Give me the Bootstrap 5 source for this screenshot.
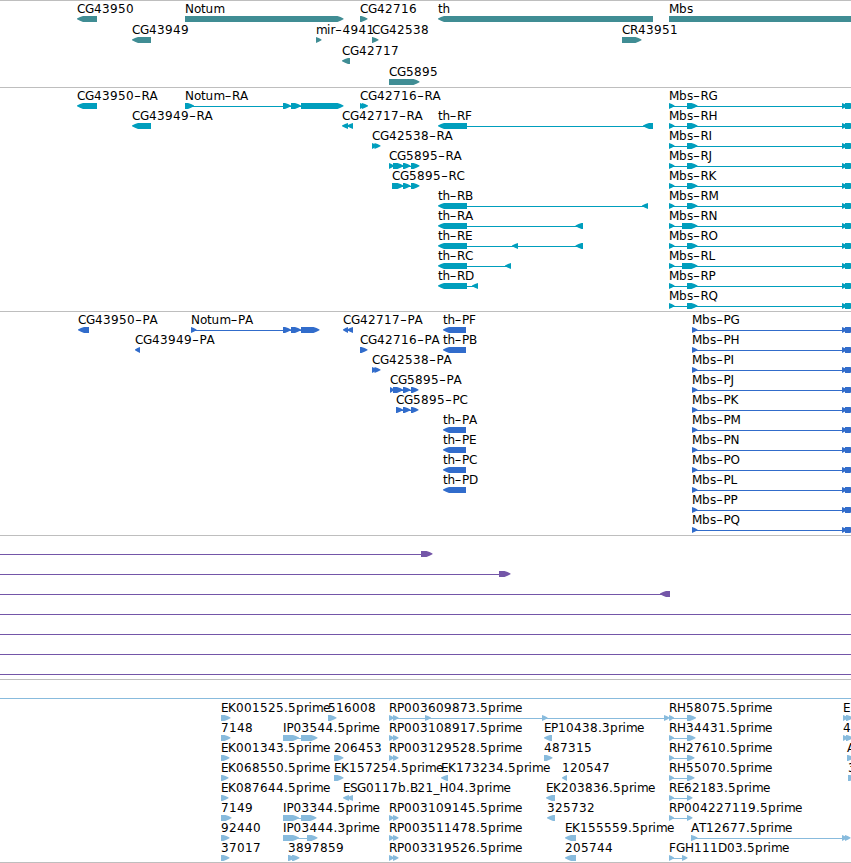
<!DOCTYPE html>
<html lang="en">
<head>
  <meta charset="UTF-8">
  <title>Genome Browser Tracks</title>
  <meta name="viewport" content="width=device-width, initial-scale=1.0">
  <link href="https://cdn.jsdelivr.net/npm/bootstrap@5.3.3/dist/css/bootstrap.min.css" rel="stylesheet">
  <style>
    body {
      font-family: "DejaVu Sans", sans-serif;
      overflow: hidden;
    }
    .browser {
      height: 863px;
      border-bottom: 1px solid #bebebe;
    }
    .track {
      border-top: 1px solid #bebebe;
    }
    .track svg {
      width: 100%;
      height: 100%;
    }
    .track text {
      font-size: 12px;
      fill: #000;
    }
    .track-genes { height: 87px; color: #408d94; }
    .track-transcripts { height: 224px; color: #009ebd; }
    .track-proteins { height: 224px; color: #316ccb; }
    .track-regions { height: 144px; color: #7456a8; }
    .track-ests { height: 183px; color: #88bbdd; }
  </style>
</head>
<body class="bg-white">

<main class="browser container-fluid p-0 d-flex flex-column overflow-hidden">
  <section class="track track-genes flex-shrink-0" data-track="genes" data-pitch="21"></section>
  <section class="track track-transcripts flex-shrink-0" data-track="transcripts" data-pitch="20"></section>
  <section class="track track-proteins flex-shrink-0" data-track="proteins" data-pitch="20"></section>
  <section class="track track-regions flex-shrink-0" data-track="regions" data-pitch="20"></section>
  <section class="track track-ests flex-shrink-0" data-track="ests" data-pitch="20"></section>
</main>

<script src="https://cdn.jsdelivr.net/npm/bootstrap@5.3.3/dist/js/bootstrap.bundle.min.js"></script>
<script>
  // each feature: [row, strand, label, blocks as [start, end]]
  const tracks = {
    genes: [
      [0, -1, "CG43950", [[77, 97]]],
      [0, 1, "Notum", [[185, 343.5]]],
      [0, 1, "CG42716", [[360, 367.5]]],
      [0, -1, "th", [[438, 653]]],
      [0, 1, "Mbs", [[669, 870]]],
      [1, -1, "CG43949", [[132, 151]]],
      [1, 1, "mir-4941", [[316, 321.5]]],
      [1, 1, "CG42538", [[372, 378.5]]],
      [1, 1, "CR43951", [[622, 641.5]]],
      [2, -1, "CG42717", [[342, 350]]],
      [3, 1, "CG5895", [[389, 419.5]]]
    ],
    transcripts: [
      [0, -1, "CG43950-RA", [[77, 97]]],
      [0, 1, "Notum-RA", [[185, 194], [283, 291], [291, 301], [301, 343.5]]],
      [0, 1, "CG42716-RA", [[360, 365], [362, 368]]],
      [1, -1, "CG43949-RA", [[132, 151]]],
      [1, -1, "CG42717-RA", [[342, 348], [347, 353]]],
      [1, -1, "th-RF", [[438, 467], [643, 653]]],
      [2, 1, "CG42538-RA", [[372, 377], [374.5, 380.5]]],
      [3, 1, "CG5895-RA", [[389, 394], [393, 403.5], [403, 410.5], [411, 419.5]]],
      [4, 1, "CG5895-RC", [[392, 403.5], [403, 410.5], [411, 419.5]]],
      [5, -1, "th-RB", [[438, 467], [642, 648]]],
      [6, -1, "th-RA", [[438, 467], [575.5, 583]]],
      [7, -1, "th-RE", [[438, 467], [512, 518], [575.5, 583]]],
      [8, -1, "th-RC", [[438, 467], [505, 511]]],
      [9, -1, "th-RD", [[438, 467], [472, 478]]]
    ],
    proteins: [
      [0, -1, "CG43950-PA", [[78, 89]]],
      [0, 1, "Notum-PA", [[191, 196.5], [283, 291], [291, 301], [301, 319.5]]],
      [0, -1, "CG42717-PA", [[343, 348], [347, 353]]],
      [0, -1, "th-PF", [[443, 466]]],
      [1, -1, "CG43949-PA", [[135, 140]]],
      [1, 1, "CG42716-PA", [[360, 367.5]]],
      [1, -1, "th-PB", [[443, 466]]],
      [2, 1, "CG42538-PA", [[372, 377], [374.5, 380.5]]],
      [3, 1, "CG5895-PA", [[390, 394], [393, 403], [403, 410.5], [411, 418.5]]],
      [4, 1, "CG5895-PC", [[396, 403], [403, 410.5], [411, 418.5]]],
      [5, -1, "th-PA", [[443, 466]]],
      [6, -1, "th-PE", [[443, 466]]],
      [7, -1, "th-PC", [[443, 466]]],
      [8, -1, "th-PD", [[443, 466]]]
    ],
    regions: [
      [0, 1, "", [[-20, -10], [421, 432.5]]],
      [1, 1, "", [[-20, -10], [499, 510.5]]],
      [2, -1, "", [[-20, -10], [660, 670]]],
      [3, 1, "", [[-20, -10], [861, 870]]],
      [4, 1, "", [[-20, -10], [861, 870]]],
      [5, 1, "", [[-20, -10], [861, 870]]],
      [6, 1, "", [[-20, -10], [861, 870]]]
    ],
    ests: [
      [0, 1, "", [[-20, -10], [861, 870]]],
      [1, 1, "EK001525.5prime", [[221, 230.5]]],
      [1, 1, "516008", [[328, 336.5]]],
      [1, 1, "RP003609873.5prime", [[389, 394], [393, 398.5], [425, 431], [542, 547.5], [664, 669.5]]],
      [1, 1, "RH58075.5prime", [[669, 674], [687, 696]]],
      [1, 1, "E", [[843, 848], [846, 853]]],
      [2, 1, "7148", [[221, 230.5]]],
      [2, 1, "IP03544.5prime", [[283, 299], [301, 317.5]]],
      [2, 1, "RP003108917.5prime", [[389, 394], [393, 398.5]]],
      [2, -1, "EP10438.3prime", [[544, 552]]],
      [2, 1, "RH34431.5prime", [[669, 674], [687, 695.5]]],
      [2, 1, "4", [[843, 848], [846, 853]]],
      [3, 1, "EK001343.5prime", [[221, 229.5]]],
      [3, 1, "206453", [[334, 343.5]]],
      [3, 1, "RP003129528.5prime", [[389, 394], [393, 398.5]]],
      [3, 1, "487315", [[544, 552.5]]],
      [3, 1, "RH27610.5prime", [[669, 674], [687, 694.5]]],
      [3, 1, "A", [[847, 854]]],
      [4, 1, "EK068550.5prime", [[221, 228.5]]],
      [4, 1, "EK157254.5prime", [[334, 343.5]]],
      [4, -1, "EK173234.5prime", [[441, 448]]],
      [4, -1, "120547", [[562, 567]]],
      [4, 1, "RH55070.5prime", [[669, 674], [687, 694.5]]],
      [4, 1, "3", [[848, 856]]],
      [5, 1, "EK087644.5prime", [[221, 228.5]]],
      [5, -1, "ESG0117b.B21_H04.3prime", [[343, 349], [347, 353]]],
      [5, -1, "EK203836.5prime", [[546, 555]]],
      [5, 1, "RE62183.5prime", [[669, 674], [687, 692.5]]],
      [6, 1, "7149", [[221, 231.5]]],
      [6, 1, "IP03344.5prime", [[283, 299], [301, 316.5]]],
      [6, 1, "RP003109145.5prime", [[389, 394], [393, 398.5]]],
      [6, -1, "325732", [[547, 555]]],
      [6, 1, "RP004227119.5prime", [[669, 674], [687, 692.5]]],
      [7, 1, "92440", [[221, 229.5]]],
      [7, 1, "IP03444.3prime", [[283, 299], [307, 317.5]]],
      [7, 1, "RP003511478.5prime", [[389, 394], [393, 398.5]]],
      [7, -1, "EK155559.5prime", [[565, 576]]],
      [7, 1, "AT12677.5prime", [[691, 697.5], [842, 847], [845, 850.5]]],
      [8, 1, "37017", [[221, 229.5]]],
      [8, 1, "3897859", [[288, 295], [292, 299.5]]],
      [8, 1, "RP003319526.5prime", [[389, 394], [393, 398.5]]],
      [8, -1, "205744", [[565, 576]]],
      [8, 1, "FGH111D03.5prime", [[669, 674], [682, 687.5]]]
    ]
  };

  // Mbs isoforms, one per row
  [..."GHIJKMNOLPQ"].forEach((iso, row) => {
    const exon = iso === "N" || iso === "L" ? 682 : 687;
    tracks.transcripts.push([row, 1, "Mbs-R" + iso, [[669, 674.5], [exon, 697.5], [842, 847], [845, 852.5]]]);
    tracks.proteins.push([row, 1, "Mbs-P" + iso, [[692, 697.5], [842, 847], [845, 852.5]]]);
  });

  // the last exon of Mbs runs off the right edge
  for (const name of ["transcripts", "proteins"]) {
    for (const feature of tracks[name]) {
      if (feature[2].startsWith("Mbs")) feature[3][feature[3].length - 1][1] = 856;
    }
  }

  // whole pixel advances for the labels, digits and anything not listed are 8
  const advance = {
    G: 9, N: 9, M: 10, H: 9, D: 9, E: 7, P: 7, F: 7, S: 7, T: 7, I: 3.5, B: 7.5,
    "-": 7.5, ".": 4, _: 6, o: 7, t: 4.5, h: 7, m: 11, s: 6, r: 4.5, i: 3.5, e: 7
  };

  function label(text, x, y) {
    if (!text) return "";
    const spans = text.split(/(-)/).map(part => {
      if (part === "-") {
        // wide hyphen
        const span = `<tspan x="${x - 0.1}" textLength="7" lengthAdjust="spacingAndGlyphs">-</tspan>`;
        x += advance["-"];
        return span;
      }
      const xs = [];
      for (const ch of part) {
        xs.push(x);
        x += advance[ch] || 8;
      }
      return `<tspan x="${xs.join(" ")}">${part}</tspan>`;
    });
    return `<text y="${y}">${spans.join("")}</text>`;
  }

  function block(start, end, strand, y) {
    const tip = Math.min(6, end - start);
    // rounded shoulders halfway along the tip
    const [tail, head] = strand > 0 ? [start, end] : [end, start];
    const neck = head - strand * tip;
    const shoulder = head - strand * tip * 0.5;
    const points = [
      [tail, y], [neck, y], [shoulder, y + 1], [head, y + 2.5],
      [head, y + 3.2], [shoulder, y + 4.8], [neck, y + 6], [tail, y + 6]
    ];
    return `<polygon points="${points.join(" ")}"/>`;
  }

  document.querySelectorAll("[data-track]").forEach(section => {
    const pitch = Number(section.dataset.pitch);
    let out = "";
    for (const [row, strand, name, blocks] of tracks[section.dataset.track]) {
      // the section border takes the first pixel row
      const top = row * pitch - 1;
      const first = blocks[0][0];
      const last = blocks[blocks.length - 1][1];
      if (blocks.length > 1) {
        out += `<rect x="${first + 2}" y="${top + 19}" width="${last - first - 4}" height="1"/>`;
      }
      out += blocks.map(([start, end]) => block(start, end, strand, top + 16)).join("");
      out += label(name, first, top + 13);
    }
    section.innerHTML = `<svg class="d-block" fill="currentColor">${out}</svg>`;
  });
</script>

</body>
</html>
